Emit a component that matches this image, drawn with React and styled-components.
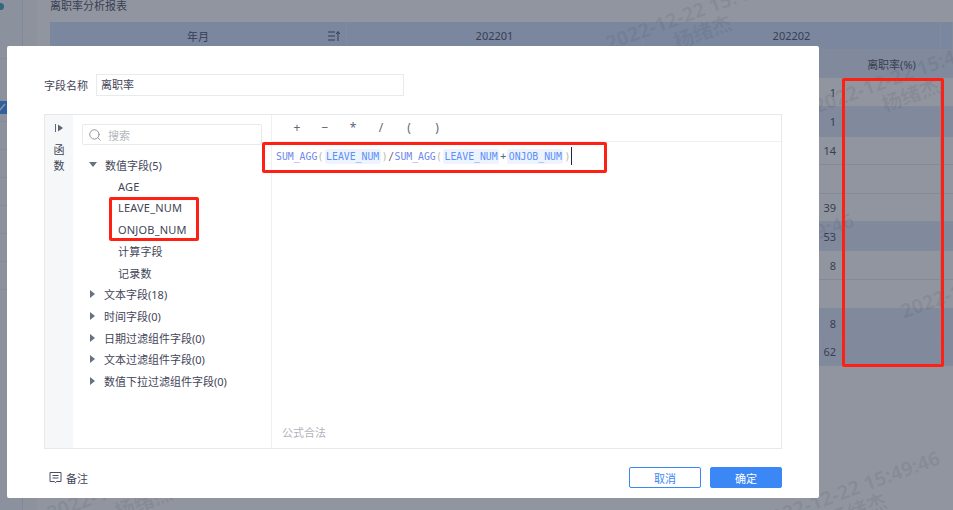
import React from "react";
import styled, { createGlobalStyle } from "styled-components";
import { Search } from "lucide-react";

const sans = `"Noto Sans", "Noto Sans CJK SC", sans-serif`;

const rows = [
  { h: 29, value: "1" },
  { h: 30, value: "1", blue: true },
  { h: 28, value: "14" },
  { h: 29, value: "" },
  { h: 28, value: "39" },
  { h: 29, value: "53", blue: true },
  { h: 29, value: "8" },
  { h: 29, value: "" },
  { h: 29, value: "8", blue: true },
  { h: 28, value: "62", blue: true },
];

const marks = [
  { x: 699, y: 12 },
  { x: 907, y: 75 },
  { x: 768, y: 252 },
  { x: 994, y: 280 },
  { x: 854, y: 490 },
  { x: 140, y: 482 },
];

const fields = ["AGE", "LEAVE_NUM", "ONJOB_NUM", "计算字段", "记录数"];
const groups = [
  "文本字段(18)",
  "时间字段(0)",
  "日期过滤组件字段(0)",
  "文本过滤组件字段(0)",
  "数值下拉过滤组件字段(0)",
];
const operators = ["+", "−", "*", "/", "(", ")"];

const App = () => {
  return (
    <Stage>
      <GlobalStyle />
      <Page>
        <NavRail>
          <NavLogo />
          <NavRow $h={59} />
          <NavRow $h={63}>
            <Checkbox>
              <svg width="13" height="13" viewBox="0 0 13 13" fill="none">
                <path d="M2 7l3 3 6-7" stroke="#fff" strokeWidth="1.4" />
              </svg>
            </Checkbox>
          </NavRow>
          {[0, 1, 2, 3, 4, 5].map((i) => (
            <NavRow key={i} $h={28} />
          ))}
        </NavRail>
        <SubRail />
        <Main>
          <ReportTitle>离职率分析报表</ReportTitle>
          <HeaderRow>
            <HeaderCell>
              年月
              <SortIcon width="12" height="12" viewBox="0 0 12 12" fill="none">
                <path d="M0 2h7M0 6h7M0 10h7M10 11V2M8.2 4L10 1.5 11.8 4" stroke="#454c66" strokeWidth="1" />
              </SortIcon>
            </HeaderCell>
            <HeaderCell>202201</HeaderCell>
            <HeaderCell>202202</HeaderCell>
            <HeaderCell />
          </HeaderRow>
          <BodyRow $blue $h={28}>
            <ValueCell />
            <RateCell>离职率(%)</RateCell>
            <ValueCell />
          </BodyRow>
          {rows.map((row, i) => (
            <BodyRow key={i} $blue={row.blue} $h={row.h}>
              <ValueCell>{row.value}</ValueCell>
              <RateCell />
              <ValueCell />
            </BodyRow>
          ))}
        </Main>
        {marks.map((m, i) => (
          <Watermark key={i} $x={m.x} $y={m.y}>
            <span>2022-12-22 15:49:46</span>
            <span>杨绪杰</span>
          </Watermark>
        ))}
      </Page>
      <Mask />
      <Modal>
        <NameRow>
          <NameLabel>字段名称</NameLabel>
          <NameInput>离职率</NameInput>
        </NameRow>
        <Editor>
          <FuncRail>
            <svg width="10" height="10" viewBox="0 0 10 10">
              <rect x="1" y="1" width="1" height="8" fill="#5d6478" />
              <path d="M4 1.5L9 5 4 8.5z" fill="#5d6478" />
            </svg>
            <FuncLabel>函<br />数</FuncLabel>
          </FuncRail>
          <TreePane>
            <SearchBox>
              <Search size={14} color="#7d8288" strokeWidth={1.4} />
              <span>搜索</span>
            </SearchBox>
            <TreeList>
              <TreeRow>
                <Caret $open />
                数值字段(5)
              </TreeRow>
              {fields.map((f) => (
                <LeafRow key={f}>{f}</LeafRow>
              ))}
              {groups.map((g) => (
                <TreeRow key={g}>
                  <Caret />
                  {g}
                </TreeRow>
              ))}
            </TreeList>
          </TreePane>
          <FormulaPane>
            <OpBar>
              {operators.map((op) => (
                <OpButton key={op}>{op}</OpButton>
              ))}
            </OpBar>
            <Formula>
              <Token $kind="fn">SUM_AGG</Token>
              <Token $kind="paren">(</Token>
              <Chip>LEAVE_NUM</Chip>
              <Token $kind="paren">)</Token>
              <Token $kind="op">/</Token>
              <Token $kind="fn">SUM_AGG</Token>
              <Token $kind="paren">(</Token>
              <Chip>LEAVE_NUM</Chip>
              <Token $kind="op">+</Token>
              <Chip>ONJOB_NUM</Chip>
              <Token $kind="paren">)</Token>
              <Caretline />
            </Formula>
            <Status>公式合法</Status>
          </FormulaPane>
        </Editor>
        <Footer>
          <NoteLink>
            <svg width="13" height="13" viewBox="0 0 13 13" fill="none">
              <path d="M1 1.5h11v9H7.5l-1 1.2-1-1.2H1z" stroke="#4a5064" />
              <path d="M3.5 4.5h6M3.5 7h6" stroke="#4a5064" />
            </svg>
            备注
          </NoteLink>
          <FooterButtons>
            <Button>取消</Button>
            <Button $primary>确定</Button>
          </FooterButtons>
        </Footer>
      </Modal>
      <Callout $x={109} $y={197} $w={90} $h={44} />
      <Callout $x={262} $y={142} $w={345} $h={31} />
      <Callout $x={842} $y={78} $w={102} $h={289} />
    </Stage>
  );
};

const GlobalStyle = createGlobalStyle`
  html, body {
    margin: 0;
    padding: 0;
    background: #fff;
    font-family: ${sans};
    font-size: 11px;
  }
`;

const Stage = styled.div`
  position: relative;
  width: 953px;
  height: 510px;
  overflow: hidden;
`;

const Page = styled.div`
  display: flex;
  height: 100%;
  background: #fff;
  color: #4c5268;
`;

const NavRail = styled.div`
  width: 22px;
  flex-shrink: 0;
  background: #f3f7fa;
  border-right: 1px solid #e2e4ea;
  position: relative;
`;

const NavLogo = styled.div`
  position: absolute;
  left: -3px;
  top: 3px;
  width: 7px;
  height: 7px;
  border-radius: 50%;
  background: #3ea6b4;
`;

const NavRow = styled.div`
  height: ${({ $h }) => $h}px;
  box-sizing: border-box;
  border-bottom: 1px solid #e6e8ed;
  display: flex;
  align-items: flex-end;
  padding-bottom: 7px;
`;

const Checkbox = styled.div`
  width: 13px;
  height: 13px;
  margin-left: -6px;
  background: #3c94ff;
  display: flex;
`;

const SubRail = styled.div`
  width: 14px;
  flex-shrink: 0;
  background: #f8f8f8;
`;

const Main = styled.main`
  flex: 1;
  padding-left: 13px;
  min-width: 0;
`;

const ReportTitle = styled.div`
  height: 22px;
  font-size: 11px;
  line-height: 11px;
`;

const HeaderRow = styled.div`
  display: grid;
  grid-template-columns: 297px 296px 298px 1fr;
  height: 28px;
  background: #d1e3fd;
`;

const HeaderCell = styled.div`
  position: relative;
  display: flex;
  align-items: center;
  justify-content: center;
  border-right: 1px solid #dfeafc;
  border-bottom: 1px solid #dfeafc;
  box-sizing: border-box;
`;

const SortIcon = styled.svg`
  position: absolute;
  right: 6px;
  top: 8px;
`;

const BodyRow = styled.div`
  display: grid;
  grid-template-columns: 792px 99px 1fr;
  height: ${({ $h }) => $h}px;
  box-sizing: border-box;
  background: ${({ $blue }) => ($blue ? "#dde9f9" : "#fff")};
  border-bottom: 1px solid #e3e9f5;
`;

const ValueCell = styled.div`
  display: flex;
  align-items: center;
  justify-content: flex-end;
  padding-right: 6px;
`;

const RateCell = styled.div`
  display: flex;
  align-items: center;
  justify-content: center;
  border-left: 1px solid #dfeafc;
  border-right: 1px solid #dfeafc;
`;

const Watermark = styled.div`
  position: absolute;
  left: ${({ $x }) => $x}px;
  top: ${({ $y }) => $y + 10}px;
  transform: translate(-50%, -50%) rotate(-20deg);
  display: flex;
  flex-direction: column;
  align-items: center;
  white-space: nowrap;
  font-size: 20px;
  line-height: 22px;
  font-weight: 700;
  color: rgba(40, 46, 70, 0.09);
`;

const Mask = styled.div`
  position: absolute;
  inset: 0;
  background: rgba(35, 43, 63, 0.5);
`;

const Modal = styled.div`
  position: absolute;
  left: 7px;
  top: 46px;
  width: 812px;
  height: 452px;
  box-sizing: border-box;
  padding: 28px 37px 0;
  background: #fff;
  border-radius: 2px;
  color: #3f4558;
`;

const NameRow = styled.div`
  display: flex;
  align-items: center;
  height: 22px;
`;

const NameLabel = styled.label`
  width: 52px;
  white-space: nowrap;
`;

const NameInput = styled.div`
  width: 308px;
  height: 22px;
  box-sizing: border-box;
  border: 1px solid #e8eaee;
  padding-left: 4px;
  line-height: 20px;
`;

const Editor = styled.div`
  display: flex;
  height: 335px;
  margin-top: 18px;
  box-sizing: border-box;
  border: 1px solid #e6e8ec;
`;

const FuncRail = styled.div`
  width: 28px;
  flex-shrink: 0;
  background: #f6f7f9;
  display: flex;
  flex-direction: column;
  align-items: center;
  padding-top: 8px;
`;

const FuncLabel = styled.div`
  margin-top: 9px;
  line-height: 16px;
  text-align: center;
`;

const TreePane = styled.div`
  width: 199px;
  flex-shrink: 0;
  box-sizing: border-box;
  padding: 9px 9px 0;
  border-right: 1px solid #eef0f3;
`;

const SearchBox = styled.div`
  display: flex;
  align-items: center;
  gap: 6px;
  height: 21px;
  box-sizing: border-box;
  padding-left: 5px;
  border: 1px solid #e8eaee;
  border-radius: 2px;
  color: #b4b7be;
`;

const TreeList = styled.div`
  margin-top: 9px;
`;

const TreeRow = styled.div`
  display: flex;
  align-items: center;
  height: 21.6px;
  padding-left: 7px;
  white-space: nowrap;
`;

const LeafRow = styled(TreeRow)`
  padding-left: 36px;
  letter-spacing: 0.2px;
`;

const Caret = styled.span`
  width: 0;
  height: 0;
  margin-right: ${({ $open }) => ($open ? "8px" : "9px")};
  border-style: solid;
  border-color: transparent;
  ${({ $open }) =>
    $open
      ? `border-width: 5px 4px 0 4px; border-top-color: #687084;`
      : `margin-left: 1px; border-width: 4px 0 4px 5px; border-left-color: #687084;`}
`;

const FormulaPane = styled.div`
  position: relative;
  flex: 1;
  min-width: 0;
`;

const OpBar = styled.div`
  display: flex;
  height: 27px;
  padding-left: 11px;
  box-sizing: border-box;
  border-bottom: 1px solid #eef0f3;
`;

const OpButton = styled.span`
  width: 28px;
  line-height: 26px;
  text-align: center;
  font-size: 12px;
  color: #5f6678;
`;

const Formula = styled.div`
  display: flex;
  align-items: center;
  height: 24px;
  margin-top: 2px;
  padding-left: 4px;
  font-family: "DejaVu Sans Mono", monospace;
  font-size: 9.8px;
`;

const tokenColors = { fn: "#6f86ee", paren: "#b9b8a4", op: "#5a6278" };

const Token = styled.span`
  color: ${({ $kind }) => tokenColors[$kind]};
  ${({ $kind }) => $kind !== "fn" && "padding: 0 0.3px;"}
`;

const Chip = styled.span`
  padding: 2px 1.5px;
  margin: 0 0.8px;
  border-radius: 2px;
  background: #eef4fe;
  color: #5b8ff9;
`;

const Caretline = styled.span`
  width: 1px;
  height: 18px;
  margin-left: 0;
  background: #1f2637;
`;

const Status = styled.div`
  position: absolute;
  left: 10px;
  bottom: 8px;
  color: #b0b3bb;
`;

const Footer = styled.div`
  display: flex;
  justify-content: space-between;
  align-items: center;
  margin-top: 18px;
  height: 21px;
`;

const NoteLink = styled.div`
  display: flex;
  align-items: center;
  gap: 4px;
  padding-left: 5px;
`;

const FooterButtons = styled.div`
  display: flex;
  gap: 9px;
`;

const Button = styled.button`
  width: 72px;
  height: 21px;
  padding: 0;
  box-sizing: border-box;
  border: 1px solid #3a87f5;
  border-radius: 2px;
  font-family: ${sans};
  font-size: 11px;
  background: ${({ $primary }) => ($primary ? "#3a87f5" : "#fff")};
  color: ${({ $primary }) => ($primary ? "#fff" : "#3a87f5")};
`;

const Callout = styled.div`
  position: absolute;
  left: ${({ $x }) => $x}px;
  top: ${({ $y }) => $y}px;
  width: ${({ $w }) => $w}px;
  height: ${({ $h }) => $h}px;
  box-sizing: border-box;
  border: 3px solid #ff2015;
  border-radius: 2px;
`;

export default App;
